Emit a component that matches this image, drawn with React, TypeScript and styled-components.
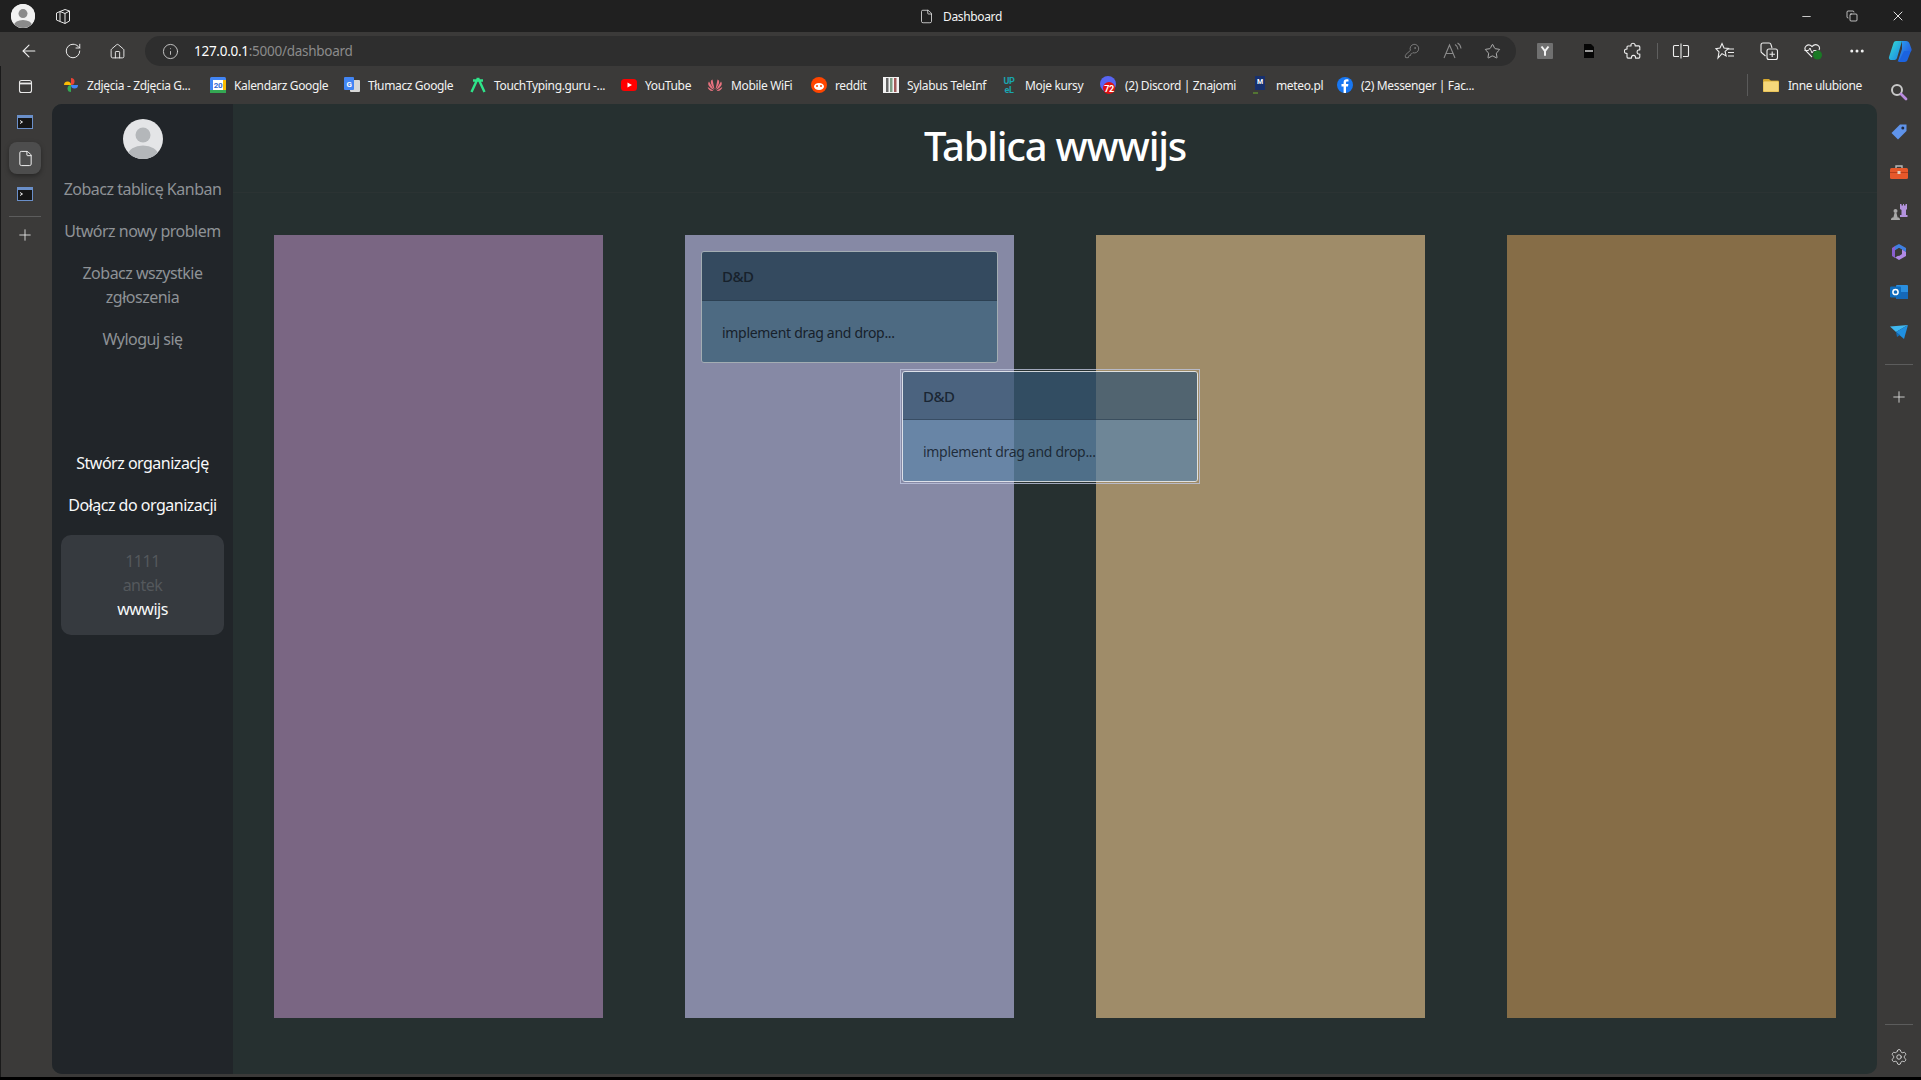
import React from "react";
import styled, { createGlobalStyle } from "styled-components";
import { ArrowLeft, Copy, Ellipsis, File, Home, Info, KeyRound, Minus, Plus, RotateCw, Settings, Star, X } from "lucide-react";

const Global = createGlobalStyle`
  html, body { margin: 0; padding: 0; height: 100%; background: #000; overflow: hidden; }
  body { font-family: "Noto Sans", "Open Sans", sans-serif; }
  * { box-sizing: border-box; }
`;

const Window = styled.div`
  width: 1921px;
  height: 1080px;
  display: flex;
  flex-direction: column;
  padding-bottom: 3px;
  background: #000;
`;

const TitleBar = styled.div`
  height: 32px;
  flex: none;
  background: #202020;
  display: grid;
  grid-template-columns: 1fr auto 1fr;
  align-items: center;
  color: #fff;
`;

const TitleLeft = styled.div`
  display: flex;
  align-items: center;
  gap: 19px;
  padding-left: 11px;
`;

const Profile = styled.div`
  width: 24px;
  height: 24px;
  border-radius: 50%;
  background: #f1f1f1;
  overflow: hidden;
  display: flex;
`;

const TitleCenter = styled.div`
  display: flex;
  align-items: center;
  gap: 9px;
  font-size: 12px;
  letter-spacing: -0.35px;
  color: #f4f4f4;
`;

const WindowButtons = styled.div`
  display: flex;
  justify-content: flex-end;
`;

const WindowButton = styled.div`
  width: 46px;
  height: 32px;
  display: flex;
  align-items: center;
  justify-content: center;
`;

const Toolbar = styled.div`
  height: 34px;
  flex: none;
  background: #3b3a39;
  padding: 4px 0 0 7px;
  display: flex;
  align-items: center;
`;

const ToolButton = styled.div`
  width: 44px;
  height: 30px;
  flex: none;
  display: flex;
  align-items: center;
  justify-content: center;
  color: #f0f0f0;
`;

const CopilotButton = styled(ToolButton)`
  width: 42px;
`;

const AddressBar = styled.div`
  flex: 1;
  height: 30px;
  margin: 0 7px 0 6px;
  padding: 0 14px 0 17px;
  border-radius: 15px;
  background: #2e2e2e;
  display: flex;
  align-items: center;
  color: #d8d8d8;
`;

const Url = styled.div`
  margin-left: 15px;
  flex: 1;
  font-size: 13.5px;
  letter-spacing: -0.27px;
  color: #8b8b8b;
  b {
    font-weight: 400;
    color: #fff;
  }
`;

const AddressIcons = styled.div`
  display: flex;
  gap: 20px;
  align-items: center;
  color: #8a8a8a;
`;

const AddressIcon = styled.div`
  width: 20px;
  display: flex;
  justify-content: center;
`;

const ToolDivider = styled.div`
  width: 4px;
  height: 16px;
  flex: none;
  display: flex;
  justify-content: center;
  &::before {
    content: "";
    width: 1px;
    background: #5f5f5f;
  }
`;

const Below = styled.div`
  flex: 1;
  min-height: 0;
  display: flex;
  background: #3b3a39;
  border-left: 1px solid #1a1a1a;
`;

const LeftRail = styled.div`
  width: 51px;
  flex: none;
  display: flex;
  flex-direction: column;
  align-items: center;
  padding: 4px 3px 0 0;
  color: #f0f0f0;
`;

const RailSlot = styled.div<{ $active?: boolean }>`
  width: 32px;
  height: 32px;
  margin-bottom: 4px;
  border-radius: 8px;
  display: flex;
  align-items: center;
  justify-content: center;
  background: ${(p) => (p.$active ? "#4d4d4d" : "transparent")};
  box-shadow: ${(p) => (p.$active ? "0 2px 5px rgba(0,0,0,.35)" : "none")};
`;

const RailLine = styled.div`
  width: 32px;
  height: 1px;
  background: #5c5c5c;
  margin: 2px 0 2px;
`;

const Center = styled.div`
  flex: 1;
  min-width: 0;
  display: flex;
  flex-direction: column;
`;

const Bookmarks = styled.div`
  height: 38px;
  flex: none;
  display: flex;
  align-items: center;
  gap: 16px;
  padding: 0 15px 0 11px;
  color: #f2f2f2;
  font-size: 12px;
  letter-spacing: -0.35px;
`;

const Bookmark = styled.div`
  display: flex;
  align-items: center;
  gap: 8px;
`;

const BookmarkLabel = styled.span<{ $w: number }>`
  width: ${(p) => p.$w}px;
  white-space: nowrap;
`;

const OtherFavs = styled.div`
  margin-left: auto;
  display: flex;
  align-items: center;
  gap: 9px;
  height: 22px;
  padding-left: 15px;
  border-left: 1px solid #5a5a5a;
`;

const Workspace = styled.div`
  flex: 1;
  min-height: 0;
  margin-bottom: 3px;
  display: flex;
  border-radius: 10px;
  overflow: hidden;
  background: #263030;
`;

const Sidebar = styled.aside`
  width: 181px;
  flex: none;
  background: #212529;
  display: flex;
  flex-direction: column;
  align-items: center;
  padding-top: 15px;
  font-size: 16px;
  line-height: 24px;
  letter-spacing: -0.5px;
  text-align: center;
`;

const Avatar = styled.div`
  width: 40px;
  height: 40px;
  border-radius: 50%;
  overflow: hidden;
  margin-bottom: 9px;
  flex: none;
`;

const NavLink = styled.div<{ $light?: boolean }>`
  width: 100%;
  padding: 9px 4px;
  color: ${(p) => (p.$light ? "#f8f9fa" : "#8e9296")};
`;

const NavGap = styled.div`
  height: 82px;
  flex: none;
`;

const OrgCard = styled.div`
  width: 163px;
  height: 100px;
  margin-top: 9px;
  border-radius: 10px;
  background: #363a3f;
  display: flex;
  flex-direction: column;
  justify-content: center;
`;

const OrgLine = styled.div<{ $light?: boolean }>`
  color: ${(p) => (p.$light ? "#f8f9fa" : "#54585c")};
`;

const Main = styled.main`
  flex: 1;
  min-width: 0;
  display: flex;
  flex-direction: column;
`;

const BoardHeader = styled.header`
  height: 89px;
  flex: none;
  border-bottom: 1px solid #2b3333;
  display: flex;
  justify-content: center;
  padding-top: 18px;
`;

const Title = styled.h1`
  margin: 0;
  font-size: 40px;
  line-height: 48px;
  font-weight: 500;
  color: #fff;
  letter-spacing: -1.25px;
`;

const Board = styled.div`
  position: relative;
  margin: 42px 41px 0;
  height: 783px;
  display: flex;
  justify-content: space-between;
`;

const Column = styled.div<{ $color: string }>`
  width: 329px;
  padding: 16px;
  background: ${(p) => p.$color};
`;

const Card = styled.div`
  border: 1px solid #a3adb3;
  border-radius: 3px;
  overflow: hidden;
  color: #17212b;
  font-size: 14px;
  letter-spacing: -0.3px;
`;

const CardHead = styled.div`
  height: 49px;
  padding: 0 20px;
  display: flex;
  align-items: center;
  background: #344a5f;
  border-bottom: 1px solid #2c4052;
  font-size: 15px;
  font-weight: 500;
  letter-spacing: -0.5px;
`;

const CardBody = styled.div`
  height: 61px;
  padding: 2px 20px 0;
  display: flex;
  align-items: center;
  background: #4d6a82;
`;

const GhostCard = styled.div`
  position: absolute;
  left: 626px;
  top: 134px;
  width: 300px;
  border: 1px solid rgba(190, 198, 222, 0.8);
  padding: 1px;
  ${Card} {
    border-color: rgba(235, 240, 245, 0.85);
    color: rgba(18, 26, 38, 0.85);
  }
  ${CardHead} {
    height: 48px;
    background: rgba(55, 87, 115, 0.75);
    border-bottom-color: rgba(44, 64, 82, 0.6);
  }
  ${CardBody} {
    background: rgba(93, 132, 167, 0.75);
  }
`;

const RightRail = styled.div`
  width: 44px;
  flex: none;
  padding: 6px 0 0;
  display: flex;
  flex-direction: column;
  align-items: center;
  color: #e8e8e8;
`;

const RightSlot = styled.div`
  width: 40px;
  height: 40px;
  flex: none;
  display: flex;
  align-items: center;
  justify-content: center;
`;

const RightLine = styled.div`
  width: 28px;
  height: 1px;
  flex: none;
  background: #5c5c5c;
  margin: 12px 0;
`;

const RailSpacer = styled.div`
  flex: 1;
`;

// --- drawn icons ---

function PersonGlyph({ bg, fg }: { bg: string; fg: string }) {
  return (
    <svg width="100%" height="100%" viewBox="0 0 40 40">
      <rect width="40" height="40" fill={bg} />
      <circle cx="20" cy="16" r="7.5" fill={fg} />
      <ellipse cx="20" cy="36" rx="15" ry="9.5" fill={fg} />
    </svg>
  );
}

function TabsIcon() {
  return (
    <svg width="18" height="18" viewBox="0 0 18 18" fill="none" stroke="#e6e6e6" strokeWidth="1">
      <path d="M6 4.5 11 2.5 15.5 4v10L11 16.5 6 14.5z" />
      <path d="M6 4.5 2.5 6v7L6 14.5M11 6.5 15.5 4M11 6.5v10M6 4.5 11 6.5" />
    </svg>
  );
}

function ReadAloud() {
  return (
    <svg width="20" height="18" viewBox="0 0 20 18" fill="none" stroke="currentColor" strokeWidth="1.1">
      <path d="M2 16 7.5 3 13 16M4 11.5h7" />
      <path d="M13 2.5c1.8 1 2.8 2.8 3 5M15.5 1c2 1 3.2 3 3.5 5.5" />
    </svg>
  );
}

function TerminalFav() {
  return (
    <svg width="16" height="14" viewBox="0 0 16 14">
      <rect x="0.5" y="0.5" width="15" height="13" fill="#161616" stroke="#6a8fc9" />
      <rect x="1" y="1" width="14" height="2" fill="#6a8fc9" />
      <path d="M3 5.5 5.5 7 3 8.5" fill="none" stroke="#eee" strokeWidth="1" />
    </svg>
  );
}

function SideIcon() {
  return (
    <svg width="15" height="15" viewBox="0 0 15 15" fill="none" stroke="#e8e8e8" strokeWidth="1.1">
      <rect x="1.5" y="1.5" width="12" height="12" rx="2" />
      <path d="M1.5 4.500h12" strokeWidth="1.8" />
    </svg>
  );
}

function YIcon() {
  return (
    <svg width="16" height="16" viewBox="0 0 16 16">
      <rect width="16" height="16" rx="1" fill="#707070" />
      <path d="M4.5 3.5 8 8.2 11.5 3.5M8 8v4.8" fill="none" stroke="#f2f2f2" strokeWidth="2" />
    </svg>
  );
}

function PdfIcon() {
  return (
    <svg width="12" height="14" viewBox="0 0 12 14">
      <path d="M1 0h7l3 3v11H1z" fill="#060606" />
      <rect x="2" y="6" width="8" height="2" fill="#9a9a9a" />
    </svg>
  );
}

function PuzzleIcon() {
  return (
    <svg width="18" height="18" viewBox="0 0 18 18" fill="none" stroke="#eee" strokeWidth="1.1">
      <path d="M7 2.5c.6-1.6 3.4-1.6 4 0 .2.6 0 1 .2 1.4h3.6a1 1 0 0 1 1 1v3c-.5.3-1 0-1.6.2-1.5.6-1.5 3.2 0 3.8.6.2 1.1-.1 1.6.2v3a1 1 0 0 1-1 1h-3.2c-.3-.5 0-1-.2-1.6-.6-1.5-3.2-1.5-3.8 0-.2.6.1 1.1-.2 1.6H4a1 1 0 0 1-1-1v-3.6c-.4-.2-.8 0-1.4-.2-1.6-.6-1.6-3.4 0-4 .6-.2 1 0 1.4-.2V5a1 1 0 0 1 1-1h3c.2-.4-.1-.9 0-1.5z" />
    </svg>
  );
}

function SplitIcon() {
  return (
    <svg width="18" height="18" viewBox="0 0 18 18" fill="none" stroke="#eee" strokeWidth="1.1">
      <path d="M7 3.5H2.5a1 1 0 0 0-1 1v9a1 1 0 0 0 1 1H7M11 3.5h4.5a1 1 0 0 1 1 1v9a1 1 0 0 1-1 1H11M9 1.5v15" />
    </svg>
  );
}

function FavListIcon() {
  return (
    <svg width="20" height="18" viewBox="0 0 20 18" fill="none" stroke="#eee" strokeWidth="1.1">
      <path d="M7 1.5 9 6l4.500.4-3.400 3 1 4.600L7 11.600 3 16l1-6-3-3.300L5 6z" />
      <path d="M13 7h6M13 10.500h6M13 14h6" />
    </svg>
  );
}

function CollectionsIcon() {
  return (
    <svg width="20" height="20" viewBox="0 0 20 20" fill="none" stroke="#eee" strokeWidth="1.1">
      <path d="M6.500 15 3 12a2 2 0 0 1-1-2V4a2 2 0 0 1 2-2h6a2 2 0 0 1 2 1.500L13 7" />
      <rect x="8" y="8" width="10.500" height="10.500" rx="2" />
      <path d="M13.200 10.500v5.500M10.500 13.200H16" />
    </svg>
  );
}

function HeartIcon() {
  return (
    <svg width="20" height="20" viewBox="0 0 20 20" fill="none">
      <path d="M9 16 3 10c-3-3.500 1.800-8.500 6-4.500 4-4 9-.5 7 3.500" stroke="#eee" strokeWidth="1.1" />
      <path d="M1.500 9.500h4l1.500-2.500 2 5 1.500-2.500h3" stroke="#eee" strokeWidth="1" />
      <circle cx="14.500" cy="14" r="4.500" fill="#1a7a25" />
    </svg>
  );
}

function CopilotIcon() {
  return (
    <svg width="24" height="24" viewBox="0 0 24 24">
      <defs>
        <linearGradient id="cp1" x1="0" y1="0" x2="1" y2="1">
          <stop offset="0" stopColor="#35e0d0" />
          <stop offset="1" stopColor="#1a7fe8" />
        </linearGradient>
        <linearGradient id="cp2" x1="0" y1="0" x2="1" y2="1">
          <stop offset="0" stopColor="#2aa6f0" />
          <stop offset="1" stopColor="#2346d8" />
        </linearGradient>
      </defs>
      <path d="M8 2h6l-5 17c-.4 1.200-1.200 2-2.500 2H3c-1.500 0-2.500-1.500-2-3L5.500 4C6 2.800 6.800 2 8 2z" fill="url(#cp1)" />
      <path d="M14 2h4c1.800 0 3 1 3.500 2.500L23.500 10c.5 1.500-.5 3-2 3L16 14l-3 8h-3l4-12z" fill="url(#cp2)" />
      <path d="M16 12h7l-3.500 9c-.5 1.200-1.500 2-2.800 2H9c1 0 2.200-.8 2.500-2z" fill="#1b63e0" />
    </svg>
  );
}

function PhotosFav() {
  return (
    <svg width="16" height="16" viewBox="0 0 16 16">
      <path d="M8 8V1a3.500 3.500 0 0 1 0 7z" fill="#ea4335" />
      <path d="M8 8h7a3.500 3.500 0 0 1-7 0z" fill="#4285f4" />
      <path d="M8 8v7a3.500 3.500 0 0 1 0-7z" fill="#34a853" />
      <path d="M8 8H1a3.500 3.500 0 0 1 7 0z" fill="#fbbc04" />
    </svg>
  );
}

function CalendarFav() {
  return (
    <svg width="16" height="16" viewBox="0 0 16 16">
      <rect width="16" height="16" rx="1.500" fill="#4285f4" />
      <rect x="3" y="3" width="10" height="10" fill="#fff" />
      <rect y="13" width="16" height="3" fill="#34a853" />
      <rect x="13" y="3" width="3" height="10" fill="#fbbc04" />
      <text x="8" y="11" textAnchor="middle" fontSize="8" fontWeight="700" fontFamily="Roboto" fill="#3367d6">20</text>
    </svg>
  );
}

function TranslateFav() {
  return (
    <svg width="16" height="16" viewBox="0 0 16 16">
      <rect x="6" y="3" width="10" height="12" rx="1" fill="#d8d8d8" />
      <rect width="10" height="13" rx="1" fill="#4285f4" />
      <text x="5" y="9.500" textAnchor="middle" fontSize="8" fontWeight="700" fontFamily="Roboto" fill="#fff">G</text>
    </svg>
  );
}

function TouchFav() {
  return (
    <svg width="16" height="18" viewBox="0 0 16 18">
      <path d="M8 2 1.500 16M8 2l6.500 14M3 4.500h10" fill="none" stroke="#2fe58a" strokeWidth="2.400" />
    </svg>
  );
}

function YoutubeFav() {
  return (
    <svg width="16" height="16" viewBox="0 0 16 16">
      <rect y="2" width="16" height="12" rx="3.500" fill="#f00" />
      <path d="M6.500 5.500v5L11 8z" fill="#fff" />
    </svg>
  );
}

function HuaweiFav() {
  return (
    <svg width="16" height="16" viewBox="0 0 16 16" fill="#e8727f">
      <path d="M7.500 12.500 5.500 2.500c-2.500.8-2.500 4 2 10zM8.500 12.500l2-10c2.500.8 2.500 4-2 10zM7 13 2 4.500C0 7 2 10.500 7 13zM9 13l5-8.500c2 2.500 0 6-5 8.500zM6.500 13.800.7 10c.2 2.500 3 4.500 5.800 3.800zM9.500 13.800 15.300 10c-.2 2.500-3 4.500-5.800 3.800z" />
    </svg>
  );
}

function RedditFav() {
  return (
    <svg width="16" height="16" viewBox="0 0 16 16">
      <circle cx="8" cy="8" r="8" fill="#ff4500" />
      <ellipse cx="8" cy="9.500" rx="5" ry="3.500" fill="#fff" />
      <circle cx="6" cy="9" r="1" fill="#ff4500" />
      <circle cx="10" cy="9" r="1" fill="#ff4500" />
    </svg>
  );
}

function SylabusFav() {
  return (
    <svg width="16" height="16" viewBox="0 0 16 16">
      <rect width="16" height="16" fill="#f2f2f2" />
      <rect x="3" y="1" width="2.500" height="14" fill="#666" />
      <rect x="7" y="1" width="2.500" height="14" fill="#7c9c84" />
      <rect x="11" y="1" width="2.500" height="14" fill="#a05a5a" />
    </svg>
  );
}

function UpelFav() {
  return (
    <svg width="16" height="18" viewBox="0 0 16 18">
      <text x="8" y="8" textAnchor="middle" fontSize="9" fontWeight="700" fontFamily="Roboto" fill="#1aa5b0">UP</text>
      <text x="8" y="17" textAnchor="middle" fontSize="9" fontWeight="700" fontFamily="Roboto" fill="#1aa5b0">eL</text>
    </svg>
  );
}

function DiscordFav() {
  return (
    <svg width="17" height="18" viewBox="0 0 17 18">
      <circle cx="8" cy="8" r="8" fill="#5865f2" />
      <circle cx="9" cy="12" r="6" fill="#e01010" />
      <text x="9" y="15.500" textAnchor="middle" fontSize="9" fontWeight="700" fontFamily="Roboto" fill="#fff">72</text>
    </svg>
  );
}

function MeteoFav() {
  return (
    <svg width="16" height="18" viewBox="0 0 16 18">
      <rect x="3" y="0" width="10" height="14" fill="#17306e" />
      <text x="8" y="8" textAnchor="middle" fontSize="7" fontWeight="700" fontFamily="Roboto" fill="#fff">M</text>
      <path d="M1 17h5" stroke="#5c8a30" strokeWidth="1.500" />
    </svg>
  );
}

function FacebookFav() {
  return (
    <svg width="16" height="16" viewBox="0 0 16 16">
      <circle cx="8" cy="8" r="8" fill="#1877f2" />
      <path d="M9 16V9.500h2l.4-2.400H9V5.800c0-.8.300-1.200 1.300-1.200h1.200V2.500C11 2.400 10.400 2.300 9.700 2.300 7.800 2.300 6.600 3.400 6.600 5.400v1.700H4.500v2.400h2.100V16z" fill="#fff" />
    </svg>
  );
}

function FolderFav() {
  return (
    <svg width="16" height="14" viewBox="0 0 16 14">
      <path d="M0 2a1 1 0 0 1 1-1h5l2 2H0z" fill="#d5a72e" />
      <rect y="3" width="16" height="11" rx="1" fill="#f5d77a" stroke="#d5a72e" strokeWidth="0.800" />
    </svg>
  );
}

function SearchFav() {
  return (
    <svg width="18" height="18" viewBox="0 0 18 18" fill="none">
      <circle cx="7" cy="7" r="5" stroke="#c9c9c9" strokeWidth="2" />
      <path d="M11 11l5 5" stroke="#b98be0" strokeWidth="2.800" strokeLinecap="round" />
    </svg>
  );
}

function TagFav() {
  return (
    <svg width="18" height="18" viewBox="0 0 18 18">
      <path d="M10 1.500h6.500V8L8 16.500 1.500 10z" fill="#5f93ea" strokeLinejoin="round" />
      <circle cx="12.800" cy="5" r="1.500" fill="#1f2a44" />
    </svg>
  );
}

function ToolboxFav() {
  return (
    <svg width="18" height="16" viewBox="0 0 18 16">
      <path d="M6 4V2h6v2" fill="none" stroke="#b9b9b9" strokeWidth="1.400" />
      <rect y="4" width="18" height="11" rx="1.500" fill="#e6582a" />
      <rect y="8" width="18" height="1" fill="#b83e1a" />
      <rect x="7.500" y="7" width="3" height="3" fill="#e0d0c0" />
    </svg>
  );
}

function ChessFav() {
  return (
    <svg width="18" height="18" viewBox="0 0 18 18">
      <path d="M10 1h1.500v1.500H13V1h1v1.500h1.500V1H17v5l-1 1v5h1.500v2H10v-2h1.500V7L10 6z" fill="#b393dd" />
      <circle cx="5.500" cy="8" r="2" fill="#a8a8a8" />
      <path d="M4.500 10h2l1 4h-4zM1 17c0-2 1-3 4.500-3S10 15 10 17z" fill="#a8a8a8" />
    </svg>
  );
}

function M365Fav() {
  return (
    <svg width="18" height="18" viewBox="0 0 18 18">
      <path d="M9 1 16 5v4L9 5 5 7.500V3z" fill="#3f7fe0" />
      <path d="M16 9v4l-7 4-4-2.500 7-4v-4z" fill="#b08ae6" />
      <path d="M2 5l3-2v12l-3-2z" fill="#8a5fd0" />
      <path d="M5 7.500 9 5l3 1.500v4.500l-3 2-4-2z" fill="#3b3a39" />
    </svg>
  );
}

function OutlookFav() {
  return (
    <svg width="18" height="18" viewBox="0 0 18 18">
      <rect x="6" y="2" width="12" height="14" rx="1" fill="#2a8fe0" />
      <rect x="6" y="9" width="12" height="7" fill="#1668b8" />
      <rect y="3.500" width="11" height="11" rx="1.200" fill="#0f6cbd" />
      <circle cx="5.500" cy="9" r="2.600" fill="none" stroke="#fff" strokeWidth="1.500" />
    </svg>
  );
}

function SendFav() {
  return (
    <svg width="18" height="16" viewBox="0 0 18 16">
      <path d="M0 2.500 18 1 6 8z" fill="#3fb8f0" />
      <path d="M18 1 6 8l8 7z" fill="#1f8fe0" />
      <path d="M6 8l1 5 3-2z" fill="#156cb5" />
    </svg>
  );
}

const bookmarks: { icon: React.ReactNode; label: string; w: number }[] = [
  { icon: <PhotosFav />, label: "Zdjęcia - Zdjęcia G...", w: 107 },
  { icon: <CalendarFav />, label: "Kalendarz Google", w: 94 },
  { icon: <TranslateFav />, label: "Tłumacz Google", w: 86 },
  { icon: <TouchFav />, label: "TouchTyping.guru -...", w: 111 },
  { icon: <YoutubeFav />, label: "YouTube", w: 46 },
  { icon: <HuaweiFav />, label: "Mobile WiFi", w: 64 },
  { icon: <RedditFav />, label: "reddit", w: 32 },
  { icon: <SylabusFav />, label: "Sylabus TeleInf", w: 78 },
  { icon: <UpelFav />, label: "Moje kursy", w: 59 },
  { icon: <DiscordFav />, label: "(2) Discord | Znajomi", w: 111 },
  { icon: <MeteoFav />, label: "meteo.pl", w: 45 },
  { icon: <FacebookFav />, label: "(2) Messenger | Fac...", w: 110 },
];

const columns = ["#7a6683", "#8689a5", "#9f8c69", "#866d47"];

function TaskCard() {
  return (
    <Card>
      <CardHead>D&amp;D</CardHead>
      <CardBody>implement drag and drop...</CardBody>
    </Card>
  );
}

export default function App() {
  return (
    <Window>
      <Global />
      <TitleBar>
        <TitleLeft>
          <Profile>
            <PersonGlyph bg="#f1f1f1" fg="#8a8a8a" />
          </Profile>
          <TabsIcon />
        </TitleLeft>
        <TitleCenter>
          <File size={15} strokeWidth={1.2} />
          Dashboard
        </TitleCenter>
        <WindowButtons>
          <WindowButton>
            <Minus size={13} strokeWidth={1.4} />
          </WindowButton>
          <WindowButton>
            <Copy size={12} strokeWidth={1.4} />
          </WindowButton>
          <WindowButton>
            <X size={16} strokeWidth={1.3} />
          </WindowButton>
        </WindowButtons>
      </TitleBar>

      <Toolbar>
        <ToolButton>
          <ArrowLeft size={20} strokeWidth={1.3} />
        </ToolButton>
        <ToolButton>
          <RotateCw size={18} strokeWidth={1.3} />
        </ToolButton>
        <ToolButton>
          <Home size={17} strokeWidth={1.3} />
        </ToolButton>
        <AddressBar>
          <Info size={17} strokeWidth={1.2} />
          <Url>
            <b>127.0.0.1</b>:5000/dashboard
          </Url>
          <AddressIcons>
            <AddressIcon>
              <KeyRound size={16} strokeWidth={1.2} />
            </AddressIcon>
            <AddressIcon>
              <ReadAloud />
            </AddressIcon>
            <AddressIcon>
              <Star size={17} strokeWidth={1.2} color="#c4c4c4" />
            </AddressIcon>
          </AddressIcons>
        </AddressBar>
        <ToolButton>
          <YIcon />
        </ToolButton>
        <ToolButton>
          <PdfIcon />
        </ToolButton>
        <ToolButton>
          <PuzzleIcon />
        </ToolButton>
        <ToolDivider />
        <ToolButton>
          <SplitIcon />
        </ToolButton>
        <ToolButton>
          <FavListIcon />
        </ToolButton>
        <ToolButton>
          <CollectionsIcon />
        </ToolButton>
        <ToolButton>
          <HeartIcon />
        </ToolButton>
        <ToolButton>
          <Ellipsis size={18} />
        </ToolButton>
        <CopilotButton>
          <CopilotIcon />
        </CopilotButton>
      </Toolbar>

      <Below>
        <LeftRail>
          <RailSlot>
            <SideIcon />
          </RailSlot>
          <RailSlot>
            <TerminalFav />
          </RailSlot>
          <RailSlot $active>
            <File size={17} strokeWidth={1.4} />
          </RailSlot>
          <RailSlot>
            <TerminalFav />
          </RailSlot>
          <RailLine />
          <RailSlot>
            <Plus size={18} strokeWidth={1.1} />
          </RailSlot>
        </LeftRail>

        <Center>
          <Bookmarks>
            {bookmarks.map((b) => (
              <Bookmark key={b.label}>
                {b.icon}
                <BookmarkLabel $w={b.w}>{b.label}</BookmarkLabel>
              </Bookmark>
            ))}
            <OtherFavs>
              <FolderFav />
              Inne ulubione
            </OtherFavs>
          </Bookmarks>

          <Workspace>
            <Sidebar>
              <Avatar>
                <PersonGlyph bg="#e4e5e7" fg="#b4b7ba" />
              </Avatar>
              <NavLink>Zobacz tablicę Kanban</NavLink>
              <NavLink>Utwórz nowy problem</NavLink>
              <NavLink>
                Zobacz wszystkie
                <br />
                zgłoszenia
              </NavLink>
              <NavLink>Wyloguj się</NavLink>
              <NavGap />
              <NavLink $light>Stwórz organizację</NavLink>
              <NavLink $light>Dołącz do organizacji</NavLink>
              <OrgCard>
                <OrgLine>1111</OrgLine>
                <OrgLine>antek</OrgLine>
                <OrgLine $light>wwwijs</OrgLine>
              </OrgCard>
            </Sidebar>

            <Main>
              <BoardHeader>
                <Title>Tablica wwwijs</Title>
              </BoardHeader>
              <Board>
                {columns.map((color, i) => (
                  <Column key={color} $color={color}>
                    {i === 1 && <TaskCard />}
                  </Column>
                ))}
                <GhostCard>
                  <TaskCard />
                </GhostCard>
              </Board>
            </Main>
          </Workspace>
        </Center>

        <RightRail>
          <RightSlot>
            <SearchFav />
          </RightSlot>
          <RightSlot>
            <TagFav />
          </RightSlot>
          <RightSlot>
            <ToolboxFav />
          </RightSlot>
          <RightSlot>
            <ChessFav />
          </RightSlot>
          <RightSlot>
            <M365Fav />
          </RightSlot>
          <RightSlot>
            <OutlookFav />
          </RightSlot>
          <RightSlot>
            <SendFav />
          </RightSlot>
          <RightLine />
          <RightSlot>
            <Plus size={18} strokeWidth={1.1} />
          </RightSlot>
          <RailSpacer />
          <RightLine />
          <RightSlot>
            <Settings size={18} strokeWidth={1.1} />
          </RightSlot>
        </RightRail>
      </Below>
    </Window>
  );
}
